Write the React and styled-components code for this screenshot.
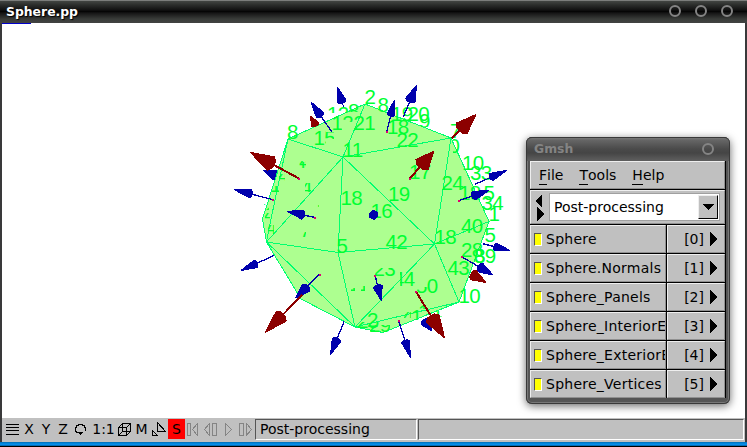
import React from "react";
import styled, { createGlobalStyle } from "styled-components";

const Global = createGlobalStyle`
  * { box-sizing: border-box; }
  body { margin: 0; overflow: hidden; font-family: "DejaVu Sans", sans-serif; color: #000; }
`;

const Desktop = styled.div`
  position: relative;
  width: 747px;
  height: 447px;
  display: flex;
  flex-direction: column;
  background: #000;
  border-radius: 5px 5px 0 0;
`;

const TitleBar = styled.header`
  flex: none;
  height: 23px;
  display: flex;
  align-items: center;
  justify-content: space-between;
  padding: 0 14px 2px 6px;
  border-top: 1px solid #7b7d7b;
  background: linear-gradient(#424542 0, #2b2d2b 4px, #111 9px, #050505 10.5px, #151515 12px, #393c39 18px, #424242 22px);
`;

const Title = styled.h1`
  margin: 0;
  font: bold 12.4px "DejaVu Sans", sans-serif;
  color: #fff;
  text-shadow: 1px 1px 1px #000;
`;

const WindowButtons = styled.div`
  display: flex;
  gap: 14px;
`;

const RoundButton = styled.button`
  width: 12px;
  height: 12px;
  padding: 0;
  border: 2px solid #848484;
  border-radius: 50%;
  background: transparent;
`;

const Body = styled.main`
  flex: none;
  height: 419px;
  margin: 0 2px;
  background: #fff;
  box-shadow: -2px 0 #39393a, 2px 0 #39393a;
`;

const Scene = styled.svg`
  display: block;
  width: 743px;
  height: 395px;
`;

const NumberLabel = styled.text`
  font: 20.5px "Liberation Sans", sans-serif;
  letter-spacing: -0.6px;
  fill: #00ff32;
`;

const BottomEdge = styled.div`
  flex: none;
  height: 5px;
  background: linear-gradient(#0068ad 0, #0082d6 1px, #0892ef 3px, #004880 4px, #000 4px);
`;

const StatusBar = styled.footer`
  height: 24px;
  display: flex;
  background: #c0c0c0;
`;

const Tool = styled.button`
  flex: none;
  width: ${(p) => p.$w || 17}px;
  height: 20px;
  margin-top: 1px;
  padding: 0;
  border: 0;
  display: flex;
  align-items: center;
  justify-content: center;
  background: ${(p) => (p.$on ? "#f00" : "transparent")};
  font: 14px "DejaVu Sans", sans-serif;
  color: ${(p) => (p.$off ? "#848484" : "#000")};
`;

const StatusField = styled.div`
  flex: ${(p) => (p.$w ? `0 0 ${p.$w}px` : "1")};
  height: 21px;
  margin: 1px 1px 0 0;
  padding-left: 4px;
  border: 1px solid;
  border-color: #555 #fff #fff #555;
  font-size: 14px;
  line-height: 19px;
`;

const Palette = styled.section`
  position: absolute;
  left: 526px;
  top: 137px;
  width: 204px;
  height: 267px;
  padding: 0 4px 5px;
  border-radius: 6px;
  background: #555;
  box-shadow: inset 0 0 0 1px #393939, inset 0 0 0 2px #777, 0 2px 9px rgba(0, 0, 0, 0.6);
`;

const PaletteTitle = styled.header`
  height: 24px;
  margin: 0 -3px;
  padding: 0 15px 2px 7px;
  display: flex;
  align-items: center;
  justify-content: space-between;
  border-top: 1px solid #393939;
  border-radius: 5px 5px 0 0;
  background: linear-gradient(#777 0, #666 2px, #4a4a4a 11px, #454545 15px, #5c5c5c 22px);
  font: bold 12.4px "DejaVu Sans", sans-serif;
  color: #848484;
`;

const Panel = styled.div`
  width: 196px;
  background: #000;
`;

const Bevel = styled.div`
  background: #c0c0c0;
  border: 1px solid;
  border-color: #eee #909090 #909090 #eee;
  font-size: 14px;
`;

const MenuBar = styled(Bevel)`
  width: 195px;
  height: 28px;
  margin-bottom: 1px;
  padding: 2px 8px 0;
  display: flex;
  align-items: center;
  gap: 16px;
`;

const Mnemonic = styled.span`
  border-bottom: 1px solid #000;
  display: inline-block;
  height: 17px;
  line-height: 15px;
`;

const Selector = styled(Bevel)`
  width: 195px;
  height: 34px;
  margin-bottom: 1px;
  padding: 2px 3px 2px 4px;
  display: flex;
  gap: 4px;
`;

const Combo = styled.div`
  width: 171px;
  height: 28px;
  padding: 1px 1px 1px 4px;
  display: flex;
  justify-content: space-between;
  align-items: center;
  background: #fff;
  border: 1px solid;
  border-color: #000 #eee #eee #000;
  outline: 1px solid #a0a0a0;
  outline-offset: -1px;
`;

const DropButton = styled.button`
  width: 20px;
  height: 24px;
  padding: 0;
  display: grid;
  place-items: center;
  background: #c0c0c0;
  border: 1px solid;
  border-color: #eee #000 #000 #eee;
`;

const ViewRow = styled.div`
  display: grid;
  grid-template-columns: 136px 58px;
  column-gap: 1px;
  height: 28px;
  margin-bottom: 1px;
`;

const ViewName = styled(Bevel)`
  display: flex;
  align-items: center;
  gap: 4px;
  padding-left: 3px;
  overflow: hidden;
  white-space: nowrap;
  letter-spacing: 0.25px;
`;

const Check = styled.i`
  flex: none;
  width: 8px;
  height: 13px;
  background: #ff0;
  border: 1px solid;
  border-color: #555 #fff #fff #555;
`;

const ViewIndex = styled(Bevel)`
  display: flex;
  align-items: center;
  justify-content: flex-end;
  gap: 6px;
  padding-right: 7px;
`;

const MESH = [
  [[288, 139], [365, 104], [451, 138], [343, 157], [288, 139]],
  [[288, 139], [262.5, 219], [266.5, 242], [271, 219], [288, 139]],
  [[365, 104], [343, 157], [266.5, 242], [338, 252.5], [343, 157]],
  [[343, 157], [451, 138], [434.5, 244], [343, 157]],
  [[338, 252.5], [434.5, 244], [355, 327], [338, 252.5]],
  [[266.5, 242], [355, 327]],
  [[266.5, 242], [301, 299], [355, 327], [383, 332.5], [459, 302], [355, 327]],
  [[451, 138], [489, 221.5], [459, 302], [434.5, 244], [489, 221.5]],
];

// Text, x, baseline and an optional visible region [x, y, width, height].
const LABELS = [
  ["2", 364.5, 104], ["8", 287, 138.5], ["11", 342.5, 157], ["21", 353.5, 130],
  ["18", 340.5, 204.5], ["19", 388, 200.5], ["22", 396.5, 146.5], ["24", 441.5, 189.5],
  ["17", 409, 178.5], ["16", 370.5, 217.5], ["18", 387, 133.5], ["19", 391, 121],
  ["20", 407.5, 120.5], ["9", 419, 127.5, [419, 111, 12, 16]], ["8", 377.5, 112],
  ["7", 450, 138], ["0", 448.5, 152.5, [453, 138, 8, 16]], ["10", 462, 170],
  ["33", 470, 179.5], ["18", 459, 200], ["5", 483.5, 200], ["34", 481.5, 210],
  ["1", 488.5, 221], ["40", 461, 232.5], ["5", 484.5, 241.5], ["18", 434.5, 243.5],
  ["28", 461, 256.5], ["39", 474, 262.5], ["8", 474, 262.5], ["43", 447.5, 275],
  ["10", 458.5, 302.5], ["42", 385.5, 249], ["5", 336.5, 252.5],
  ["12", 327, 121, [327, 104, 22, 9]], ["8", 348, 118, [344, 101, 17, 11]],
  ["12", 331.5, 130, [331, 115, 11, 16]], ["12", 331.5, 130, [342, 115, 11, 7]],
  ["15", 313.5, 144.5, [313, 129, 13, 16]], ["15", 313.5, 145, [325, 132, 9, 7]],
  ["23", 373.5, 276, [375, 268, 21, 9]], ["44", 393, 286, [400, 272, 16, 15]],
  ["50", 416, 292.5, [417, 287, 11, 7]], ["50", 416, 292.5, [427, 278, 12, 15]],
  ["14", 297, 172, [300, 162, 6, 6]], ["4", 299, 168, [299, 161, 7, 6]],
  ["4", 278, 182, [279, 174, 6, 7]],
  ["4", 301, 194, [305, 183, 6, 9]], ["1", 270, 192, [272, 186, 7, 7]],
  ["2", 262, 215, [264, 204, 5, 6]], ["4", 264, 221, [265, 213, 5, 6]],
  ["4", 266, 234, [268, 225, 6, 9]], ["7", 299, 240, [302, 232, 4, 5]],
  ["1", 313, 209, [316, 205, 3, 2]],
  ["1", 348, 291, [351, 288, 4, 3]], ["1", 358, 291, [361, 286, 4, 5]],
  ["25", 357, 328, [358, 322, 30, 7]], ["2", 367, 327, [366, 312, 12, 16]],
  ["29", 369, 332, [370, 325, 20, 7]], ["41", 403, 322, [404, 312, 7, 6]],
  ["15", 411, 324, [412, 309, 8, 11]], ["16", 418, 319, [418, 300, 11, 9]],
  ["1", 432, 318, [434, 311, 8, 6]],
];

// Tail x/y, tip x/y, head length, head width.
const BLUE_BACK = [
  [344, 108, 337.2, 87, 15, 9], [276, 176, 263, 170, 13, 10],
];

const BLUE = [
  [331.7, 131.7, 311, 102, 16, 9], [272.3, 199.5, 234, 189.6, 17, 8],
  [315, 217.5, 287, 211.3, 16, 9], [386.7, 131.7, 394.5, 100, 15, 8],
  [403.5, 116.5, 416.5, 85.3, 16, 10], [475.2, 184.2, 507, 170.2, 17, 8],
  [458.7, 200.7, 489, 190.5, 16, 9], [482.7, 243.7, 510, 250.5, 15, 8],
  [461.7, 256.7, 493, 275, 15, 10], [375.2, 275.7, 381.2, 300.5, 14, 9],
  [398.7, 321, 410.7, 358, 17, 8], [424, 321, 432, 331, 12, 9],
  [274, 255.5, 241, 270.5, 16, 8], [319.3, 274.3, 295.5, 298.2, 15, 10],
  [344, 321.7, 330.5, 354.8, 16, 9],
];

const RED = [
  [298.7, 178.3, 250, 152.2, 24, 15], [410, 178.3, 433.8, 151.2, 18, 16],
  [451.7, 138.3, 476, 114.4, 20, 15], [416, 291.7, 444.6, 338, 23, 15],
  [475, 276, 486, 282.5, 15, 11], [302.3, 295, 265, 332.6, 23, 14],
  [315, 124, 310.3, 116, 10, 8],
];

const DOTS = [
  [298.5, 178.5], [272.5, 199.5], [315, 217.5], [386.5, 132], [410, 178.5],
  [458.7, 200.7], [461.5, 256.7], [375, 275.5], [398.5, 321], [416, 291.7], [319.5, 274.5],
];

function Arrow({ data, color, weight }) {
  const [x, y, tx, ty, len, width] = data;
  const d = Math.hypot(tx - x, ty - y);
  const ux = (tx - x) / d;
  const uy = (ty - y) / d;
  const bx = tx - ux * len;
  const by = ty - uy * len;
  const px = (-uy * width) / 2;
  const py = (ux * width) / 2;
  const k = width * 0.2;
  const points = [
    [tx, ty], [bx + px, by + py],
    [bx + px * 0.5 - ux * k, by + py * 0.5 - uy * k],
    [bx - px * 0.5 - ux * k, by - py * 0.5 - uy * k],
    [bx - px, by - py],
  ];
  return (
    <g fill={color} stroke={color}>
      <line x1={x} y1={y} x2={tx} y2={ty} strokeWidth="1" />
      <line x1={x} y1={y} x2={bx} y2={by} strokeWidth={weight} />
      <polygon points={points.join(" ")} strokeWidth="1" strokeLinejoin="bevel" />
    </g>
  );
}

function SphereView() {
  return (
    <Scene viewBox="2 23 743 395">
      <path d="M2 23.5H31" stroke="#00c" shapeRendering="crispEdges" />
      <g shapeRendering="crispEdges">
        {BLUE_BACK.map((a, i) => <Arrow key={i} data={a} color="#0000ad" weight="1.2" />)}
        <polygon
          fill="#adff90"
          points="288,139 365,104 451,138 489,221.5 459,302 383,332.5 355,327 301,299 267,242 262.5,219"
        />
        {MESH.map((line, i) => (
          <polyline key={i} points={line.join(" ")} fill="none" stroke="#00ff70" strokeWidth="1" />
        ))}
      </g>
      {LABELS.map(([text, x, y, clip], i) => (
        <g key={i}>
          {clip && (
            <clipPath id={`label-${i}`}>
              <rect x={clip[0]} y={clip[1]} width={clip[2]} height={clip[3]} />
            </clipPath>
          )}
          <NumberLabel x={x} y={y} clipPath={clip ? `url(#label-${i})` : undefined}>{text}</NumberLabel>
        </g>
      ))}
      <g shapeRendering="crispEdges">
        {BLUE.map((a, i) => <Arrow key={i} data={a} color="#0000ad" weight="1.3" />)}
        <polygon points="373.5,209.5 378,212 378.5,216 374,220 369.5,217.5 369,213" fill="#0000ad" />
        {RED.map((a, i) => <Arrow key={i} data={a} color="#8c0000" weight="2" />)}
        {DOTS.map(([x, y], i) => <rect key={i} x={x - 1} y={y - 1} width="2" height="2" fill="#e00070" />)}
      </g>
    </Scene>
  );
}

function Glyph({ w = 14, d, filled }) {
  return (
    <svg width={w} height="15" viewBox={`0 0 ${w} 15`} fill="none" stroke="currentColor" shapeRendering="crispEdges">
      <path d={d} />
      {filled && <path d={filled} fill="currentColor" stroke="none" />}
    </svg>
  );
}

function Triangle({ w, h, points }) {
  return (
    <svg width={w} height={h} viewBox={`0 0 ${w} ${h}`} shapeRendering="crispEdges">
      <polygon points={points} />
    </svg>
  );
}

const VIEWS = ["Sphere", "Sphere.Normals", "Sphere_Panels", "Sphere_InteriorEdges", "Sphere_ExteriorEdges", "Sphere_Vertices"];

export default function App() {
  return (
    <Desktop>
      <Global />
      <TitleBar>
        <Title>Sphere.pp</Title>
        <WindowButtons>
          <RoundButton /><RoundButton /><RoundButton />
        </WindowButtons>
      </TitleBar>
      <Body>
        <SphereView />
        <StatusBar>
          <Tool $w={19}><Glyph d="M1 2.5H14M1 5.5H14M1 8.5H14M1 12.5H14" /></Tool>
          <Tool $w={16}>X</Tool>
          <Tool $w={18}>Y</Tool>
          <Tool $w={16}>Z</Tool>
          <Tool $w={20}>
            <Glyph d="M4.5 10.5H2.5V9.5H1.5V5.5H2.5V3.5H4.5V2.5H8.5V3.5H10.5V5.5H11.5V8.5H10.5" filled="M4 10H9V11H8V12H7V13H6V12H5V11H4Z" />
          </Tool>
          <Tool $w={25}>1:1</Tool>
          <Tool $w={17}><Glyph d="M.5 5.5H8.5V13.5H.5ZM4.5 1.5H12.5V9.5H4.5ZM.5 5.5L4.5 1.5M8.5 5.5L12.5 1.5M8.5 13.5L12.5 9.5M.5 13.5L4.5 9.5" /></Tool>
          <Tool $w={17}>M</Tool>
          <Tool $w={18}><Glyph d="M5.5 .5V9.5H13.5ZM.5 8.5V13.5H5.5Z" /></Tool>
          <Tool $w={17} $on>S</Tool>
          <Tool $w={16} $off><Glyph w={12} d="M.5 1.5H3.5V13.5H.5ZM10.5 1.5L5.5 7.5L10.5 13.5Z" /></Tool>
          <Tool $w={19} $off><Glyph w={14} d="M5.5 1.5L.5 7.5L5.5 13.5ZM8.5 1.5H12.5V13.5H8.5Z" /></Tool>
          <Tool $w={17} $off><Glyph w={8} d="M.5 1.5L6.5 7.5L.5 13.5Z" /></Tool>
          <Tool $w={17} $off><Glyph w={14} d="M.5 1.5H4.5V13.5H.5ZM7.5 1.5L12.5 7.5L7.5 13.5Z" /></Tool>
          <Tool $w={1} />
          <StatusField $w={162}>Post-processing</StatusField>
          <StatusField />
        </StatusBar>
      </Body>
      <BottomEdge />
      <Palette>
        <PaletteTitle>Gmsh<RoundButton /></PaletteTitle>
        <Panel>
          <MenuBar>
            {["File", "Tools", "Help"].map((m) => (
              <span key={m}><Mnemonic>{m[0]}</Mnemonic>{m.slice(1)}</span>
            ))}
          </MenuBar>
          <Selector>
            <svg width="10" height="28" viewBox="0 0 10 28" shapeRendering="crispEdges">
              <path d="M0 8L7 1V15ZM2 14V28L9 21Z" />
            </svg>
            <Combo>
              Post-processing
              <DropButton><Triangle w={12} h={6} points="0,0 12,0 6,6" /></DropButton>
            </Combo>
          </Selector>
          {VIEWS.map((name, i) => (
            <ViewRow key={name}>
              <ViewName><Check />{name}</ViewName>
              <ViewIndex>[{i}]<Triangle w={7} h={14} points="0,0 7,7 0,14" /></ViewIndex>
            </ViewRow>
          ))}
        </Panel>
      </Palette>
    </Desktop>
  );
}
